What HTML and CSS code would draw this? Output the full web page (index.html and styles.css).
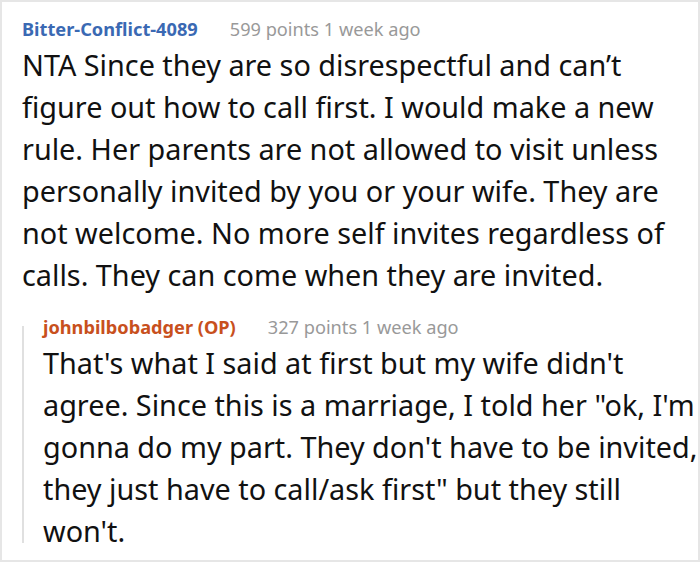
FILE: index.html
```html
<!DOCTYPE html>
<html>
<head>
<meta charset="utf-8">
<link rel="stylesheet" href="styles.css">
</head>
<body>
<div class="comment">
  <div class="meta">
    <span class="author">Bitter-Conflict-4089</span>
    <span class="score">599 points 1 week ago</span>
  </div>
  <p class="text main-text">NTA Since they are so disrespectful and can’t<br>
  figure out how to call first. I would make a new<br>
  rule. Her parents are not allowed to visit unless<br>
  personally invited by you or your wife. They are<br>
  not welcome. No more self invites regardless of<br>
  calls. They can come when they are invited.</p>
  <div class="reply">
    <div class="meta reply-meta">
      <span class="author op">johnbilbobadger (OP)</span>
      <span class="score">327 points 1 week ago</span>
    </div>
    <p class="text reply-text">That's what I said at first but my wife didn't<br>
    agree. Since this is a marriage, I told her "ok, I'm<br>
    gonna do my part. They don't have to be invited,<br>
    they just have to call/ask first" but they still<br>
    won't.</p>
  </div>
</div>
</body>
</html>
```

FILE: styles.css
```css
html, body {
  margin: 0;
  padding: 0;
  background: #ffffff;
}

.comment {
  box-sizing: border-box;
  width: 700px;
  height: 562px;
  border: 2px solid #e6e6e6;
  padding: 12px 0 0 20px;
  font-family: "Noto Sans", "Open Sans", sans-serif;
  color: #111111;
}

.meta {
  display: flex;
  gap: 32px;
  font-size: 18.2px;
  line-height: 30px;
}

.author {
  font-weight: 700;
  color: #3a69b3;
}

.author.op {
  color: #c8501d;
}

.score {
  color: #999999;
}

.text {
  margin: 0;
  font-size: 28.8px;
  line-height: 42px;
}

.reply {
  display: flow-root;
  margin-top: 30px;
  border-left: 2px solid #e0e0e0;
  padding-left: 19px;
}

.reply-meta {
  margin-top: -14px;
}

.reply-text {
  margin-bottom: -9px;
}
```
